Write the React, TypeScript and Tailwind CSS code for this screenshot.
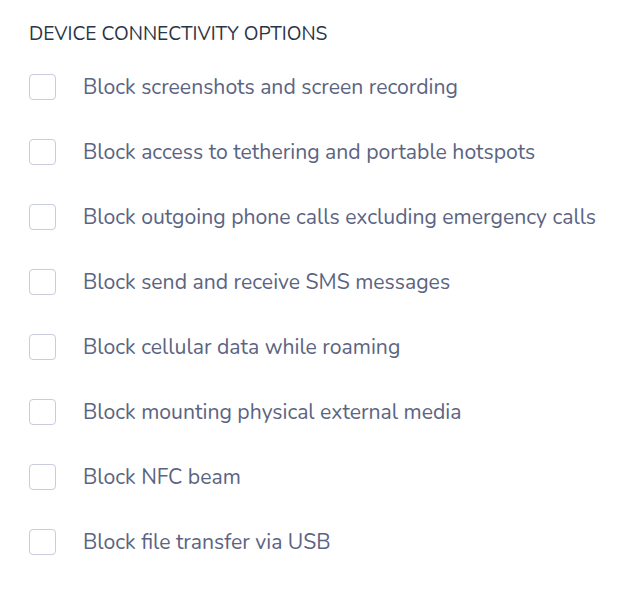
import React from "react";

const items = [
  "Block screenshots and screen recording",
  "Block access to tethering and portable hotspots",
  "Block outgoing phone calls excluding emergency calls",
  "Block send and receive SMS messages",
  "Block cellular data while roaming",
  "Block mounting physical external media",
  "Block NFC beam",
  "Block file transfer via USB",
];

export default function App() {
  return (
    <div
      className="w-[632px] h-[612px] bg-white pl-[29px] pt-[22px]"
      style={{ fontFamily: "Nunito, Lato, 'Open Sans', sans-serif" }}
    >
      <div className="text-[19.2px] leading-[24px] text-[#2b3445] uppercase">
        Device connectivity options
      </div>
      <div className="mt-[8px] flex flex-col">
        {items.map((t) => (
          <label key={t} className="h-[65px] flex items-center gap-[27px]">
            <span className="w-[27px] h-[26px] rounded-[4px] border border-[#c8ccdb] bg-white shrink-0" />
            <span className="pt-[2px] text-[21.2px] text-[#5b6481] whitespace-nowrap">{t}</span>
          </label>
        ))}
      </div>
    </div>
  );
}
